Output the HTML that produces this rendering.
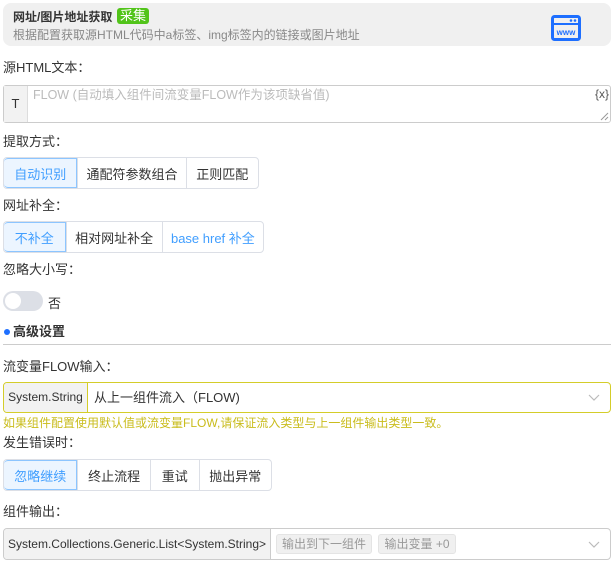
<!DOCTYPE html>
<html><head><meta charset="utf-8"><style>
*{box-sizing:border-box;margin:0;padding:0}
body{width:614px;height:563px;background:#fff;font-family:"Liberation Sans","Noto Sans CJK SC",sans-serif;font-size:13px;color:#333;position:relative;overflow:hidden}
.a{position:absolute}
.lbl{position:absolute;left:3px;font-size:13px;color:#333;line-height:16px}
.grp{position:absolute;display:flex;border:1px solid #dcdfe6;border-radius:4px;overflow:hidden;height:32px}
.grp div{display:flex;align-items:center;justify-content:center;border-left:1px solid #dcdfe6;font-size:13px;color:#333}
.grp div:first-child{border-left:none}
.grp .on{background:#ecf5ff;color:#409eff;border:1px solid #8cc5ff;border-radius:4px 0 0 4px}
</style></head><body>
<div class="a" style="left:3px;top:3px;width:608px;height:43px;background:#f0f0f0;border-radius:8px"></div>
<div class="a" style="left:13px;top:9px;font-size:12px;font-weight:bold;color:#333;line-height:16px">网址/图片地址获取</div>
<div class="a" style="left:117px;top:8px;width:32px;height:16px;background:#52c41a;border-radius:3px;color:#fff;font-size:13px;line-height:16px;text-align:center">采集</div>
<div class="a" style="left:13px;top:28px;font-size:12px;color:#888;line-height:15px">根据配置获取源HTML代码中a标签、img标签内的链接或图片地址</div>
<svg class="a" style="left:551px;top:15px" width="30" height="26" viewBox="0 0 30 26"><rect x="1.5" y="1.5" width="27" height="23" rx="2" fill="none" stroke="#1e6fff" stroke-width="3"/><line x1="1.5" y1="9" x2="28.5" y2="9" stroke="#1e6fff" stroke-width="2"/><circle cx="20" cy="5.5" r="1.3" fill="#1e6fff"/><circle cx="24" cy="5.5" r="1.3" fill="#1e6fff"/><text x="15" y="20" font-size="8" font-family="Liberation Sans" fill="#1e6fff" text-anchor="middle" font-weight="bold">www</text></svg>

<div class="lbl" style="top:60px">源HTML文本：</div>
<div class="a" style="left:3px;top:85px;width:608px;height:38px;border:1px solid #ccc;border-radius:3px"></div>
<div class="a" style="left:4px;top:86px;width:24px;height:36px;background:#f2f2f2;border-right:1px solid #ddd;text-align:center;line-height:36px;font-size:13px">T</div>
<div class="a" style="left:33px;top:87px;color:#bbb;font-size:12.5px;line-height:16px">FLOW (自动填入组件间流变量FLOW作为该项缺省值)</div>
<div class="a" style="left:595px;top:87px;font-size:12px;color:#555">{x}</div>
<svg class="a" style="left:600px;top:112px" width="9" height="9"><path d="M1 8L8 1M5 8L8 5" stroke="#999" stroke-width="1"/></svg>

<div class="lbl" style="top:134px">提取方式：</div>
<div class="grp" style="left:3px;top:157px;width:256px"><div class="on" style="width:74px">自动识别</div><div style="width:109px">通配符参数组合</div><div style="width:73px">正则匹配</div></div>

<div class="lbl" style="top:198px">网址补全：</div>
<div class="grp" style="left:3px;top:221px;width:261px"><div class="on" style="width:62px">不补全</div><div style="width:97px">相对网址补全</div><div style="width:102px;color:#409eff">base href 补全</div></div>

<div class="lbl" style="top:262px">忽略大小写：</div>
<div class="a" style="left:3px;top:291px;width:40px;height:20px;background:#dcdfe6;border-radius:10px"></div>
<div class="a" style="left:5px;top:293px;width:16px;height:16px;background:#fff;border-radius:50%"></div>
<div class="a" style="left:48px;top:293px;font-size:13px">否</div>

<div class="a" style="left:4px;top:329px;width:6px;height:6px;background:#1e6fff;border-radius:50%"></div>
<div class="a" style="left:13px;top:324px;font-size:13px;font-weight:bold;line-height:16px">高级设置</div>
<div class="a" style="left:3px;top:344px;width:608px;height:1px;background:#ccc"></div>

<div class="lbl" style="top:359px">流变量FLOW输入：</div>
<div class="a" style="left:3px;top:382px;width:608px;height:31px;border:1px solid #d4cd2a;border-radius:4px;overflow:hidden">
<div class="a" style="left:0;top:0;width:84px;height:29px;background:#f2f2f2;border-right:1px solid #d4cd2a;line-height:29px;text-align:center;font-size:12px">System.String</div>
<div class="a" style="left:90px;top:0;line-height:29px;font-size:13px">从上一组件流入（FLOW)</div>
<svg class="a" style="left:584px;top:11px" width="12" height="8"><path d="M1 1L6 6L11 1" fill="none" stroke="#bbb" stroke-width="1.2"/></svg></div>
<div class="a" style="left:3px;top:416px;color:#c9bc1c;font-size:12px;line-height:15px">如果组件配置使用默认值或流变量FLOW,请保证流入类型与上一组件输出类型一致。</div>

<div class="lbl" style="top:435px">发生错误时：</div>
<div class="grp" style="left:3px;top:459px;width:269px"><div class="on" style="width:74px">忽略继续</div><div style="width:73px">终止流程</div><div style="width:49px">重试</div><div style="width:73px">抛出异常</div></div>

<div class="lbl" style="top:504px">组件输出：</div>
<div class="a" style="left:3px;top:528px;width:608px;height:32px;border:1px solid #ccc;border-radius:4px;overflow:hidden">
<div class="a" style="left:0;top:0;width:267px;height:30px;background:#f2f2f2;border-right:1px solid #ccc;line-height:30px;text-align:center;font-size:12px">System.Collections.Generic.List&lt;System.String&gt;</div>
<div class="a" style="left:272px;top:5px;width:96px;height:20px;background:#f0f0f0;border:1px solid #e4e4e4;border-radius:3px;color:#999;font-size:12px;line-height:18px;text-align:center">输出到下一组件</div>
<div class="a" style="left:374px;top:5px;width:78px;height:20px;background:#f0f0f0;border:1px solid #e4e4e4;border-radius:3px;color:#999;font-size:12px;line-height:18px;text-align:center">输出变量 +0</div>
<svg class="a" style="left:584px;top:12px" width="12" height="8"><path d="M1 1L6 6L11 1" fill="none" stroke="#bbb" stroke-width="1.2"/></svg></div>
</body></html>
